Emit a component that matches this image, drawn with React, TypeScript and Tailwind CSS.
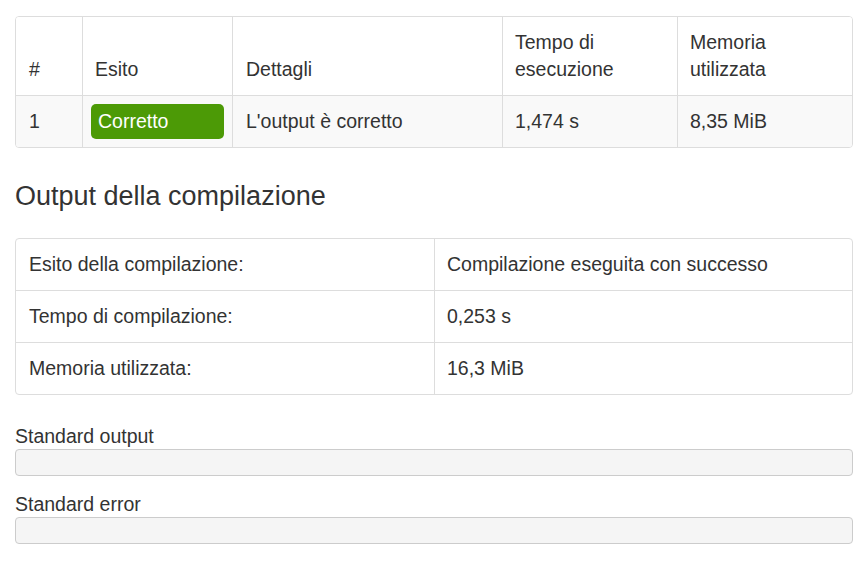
import React from "react";

const font = { fontFamily: '"Liberation Sans", Arial, sans-serif' };

export default function App() {
  return (
    <div
      className="min-h-[563px] w-[863px] bg-white pl-[15px] pt-[16px] text-[19.5px] leading-[27px] text-[#333]"
      style={font}
    >
      {/* Table 1 */}
      <div className="w-[838px] overflow-hidden rounded-[4px] border border-[#ddd]">
        <div className="grid grid-cols-[66px_150px_270px_175px_1fr] border-b border-[#ddd] bg-white">
          <div className="flex h-[78px] items-end px-[13px] py-[12px]">#</div>
          <div className="flex items-end border-l border-[#ddd] px-[12px] py-[12px]">Esito</div>
          <div className="flex items-end border-l border-[#ddd] px-[13px] py-[12px]">Dettagli</div>
          <div className="flex items-end border-l border-[#ddd] px-[12px] py-[12px]">
            <span>
              Tempo di
              <br />
              esecuzione
            </span>
          </div>
          <div className="flex items-end border-l border-[#ddd] px-[12px] py-[12px]">
            <span>
              Memoria
              <br />
              utilizzata
            </span>
          </div>
        </div>
        <div className="grid h-[51px] grid-cols-[66px_150px_270px_175px_1fr] bg-[#f9f9f9]">
          <div className="flex items-center px-[13px]">1</div>
          <div className="flex items-center border-l border-[#ddd] p-[8px]">
            <div className="flex h-[35px] w-full items-center rounded-[5px] bg-[#4c9a06] px-[7px] text-white">
              Corretto
            </div>
          </div>
          <div className="flex items-center border-l border-[#ddd] px-[13px]">L'output è corretto</div>
          <div className="flex items-center border-l border-[#ddd] px-[12px]">1,474 s</div>
          <div className="flex items-center border-l border-[#ddd] px-[12px]">8,35 MiB</div>
        </div>
      </div>

      {/* Heading */}
      <h3 className="mt-[33px] text-[27px] leading-[30px] text-[#333]">Output della compilazione</h3>

      {/* Table 2 */}
      <div className="mt-[27px] w-[838px] overflow-hidden rounded-[4px] border border-[#ddd] bg-white">
        {[
          ["Esito della compilazione:", "Compilazione eseguita con successo"],
          ["Tempo di compilazione:", "0,253 s"],
          ["Memoria utilizzata:", "16,3 MiB"],
        ].map(([k, v], i) => (
          <div
            key={k}
            className={
              i < 2
                ? "grid h-[52px] grid-cols-2 border-b border-[#ddd]"
                : "grid h-[51px] grid-cols-2"
            }
          >
            <div className="flex items-center px-[13px]">{k}</div>
            <div className="flex items-center border-l border-[#ddd] px-[12px]">{v}</div>
          </div>
        ))}
      </div>

      {/* Standard output */}
      <div className="mt-[28px] leading-[26px]">Standard output</div>
      <div className="h-[27px] w-[838px] rounded-[4px] border border-[#ccc] bg-[#f5f5f5]" />

      <div className="mt-[15px] leading-[26px]">Standard error</div>
      <div className="h-[27px] w-[838px] rounded-[4px] border border-[#ccc] bg-[#f5f5f5]" />
    </div>
  );
}
